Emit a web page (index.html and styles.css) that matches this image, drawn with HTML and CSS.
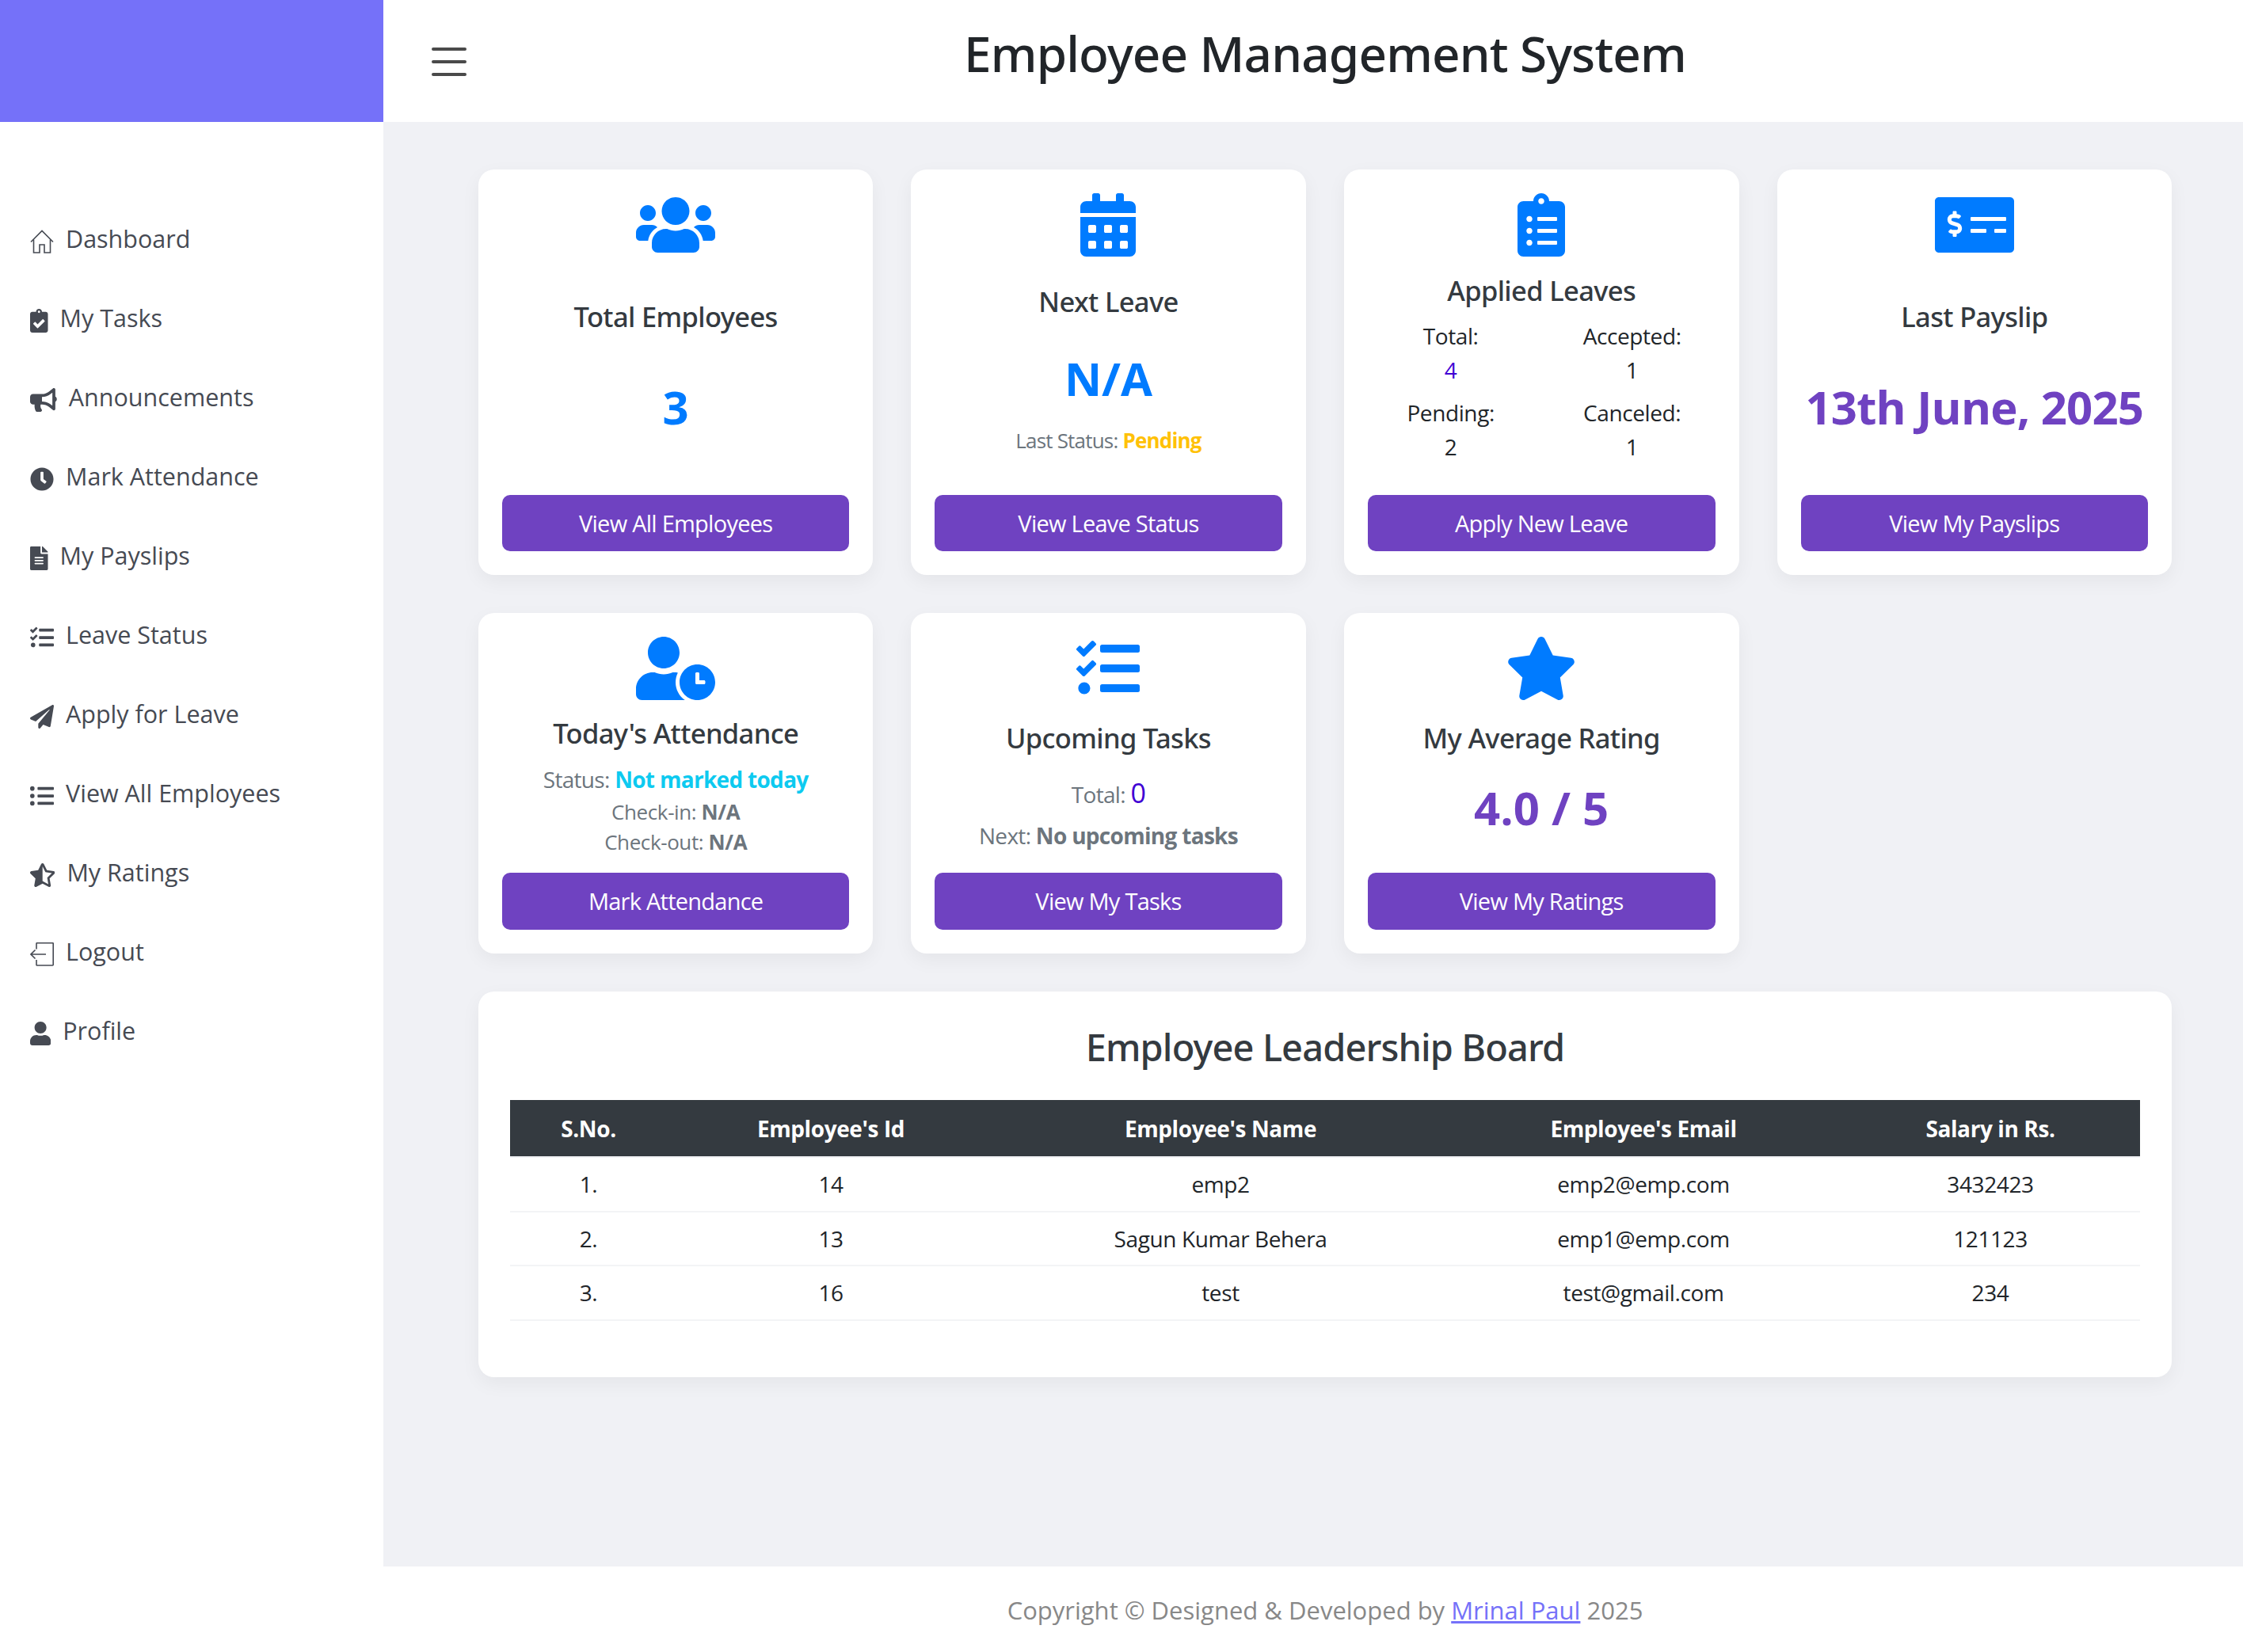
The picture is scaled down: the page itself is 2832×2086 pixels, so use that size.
FILE: index.html
```html
<!DOCTYPE html>
<html>

<head>
    <title>Employee Management System</title>
    <link rel="stylesheet" href="styles.css">
</head>

<body>
    <div class="layout">
        <aside class="sidebar">
            <div class="brand"></div>
            <nav class="nav">
                <a class="nav-item" href="#">
                    <svg class="nav-icon" viewBox="0 0 30 30" fill="none" stroke="currentColor" stroke-width="1.6"><path d="M1 15.5 15 1.5l14 14"/><path d="M4.5 12.5V29h7.5v-10h6v10h7.5V12.5"/></svg>
                    <span>Dashboard</span>
                </a>
                <a class="nav-item" href="#">
                    <svg class="nav-icon" viewBox="0 0 384 512" fill="currentColor"><path d="M336 64h-80c0-35.3-28.7-64-64-64s-64 28.7-64 64H48C21.5 64 0 85.5 0 112v352c0 26.5 21.5 48 48 48h288c26.5 0 48-21.5 48-48V112c0-26.5-21.5-48-48-48zM192 40c13.3 0 24 10.7 24 24s-10.7 24-24 24-24-10.7-24-24 10.7-24 24-24zm121.2 231.8l-143 141.8c-4.7 4.7-12.3 4.6-17-.1l-82.6-83.3c-4.7-4.7-4.6-12.3.1-17L99.1 285c4.7-4.7 12.3-4.6 17 .1l46 46.4 106-105.2c4.7-4.7 12.3-4.6 17 .1l28.2 28.4c4.7 4.8 4.6 12.3-.1 17z"/></svg>
                    <span>My Tasks</span>
                </a>
                <a class="nav-item" href="#">
                    <svg class="nav-icon" viewBox="0 0 576 512" fill="currentColor"><path d="M576 240c0-23.63-12.95-44.04-32-55.12V32.01C544 23.26 537.02 0 512 0c-7.12 0-14.19 2.38-19.98 7.02l-85.03 68.03C364.28 109.19 310.66 128 256 128H64c-35.35 0-64 28.65-64 64v96c0 35.35 28.65 64 64 64h33.7c-1.39 10.48-2.18 21.14-2.18 32 0 39.77 9.26 77.35 25.56 110.94 5.19 10.69 16.52 17.06 28.4 17.06h74.28c26.05 0 41.69-29.84 25.9-50.56-16.4-21.52-26.15-48.36-26.15-77.44 0-11.11 1.62-21.79 4.41-32H256c54.66 0 108.28 18.81 150.98 52.95l85.03 68.03a32.023 32.023 0 0 0 19.98 7.02c24.92 0 32-22.78 32-32V295.13C563.05 284.04 576 263.63 576 240zm-96 141.42l-33.05-26.44C392.95 311.78 325.12 288 256 288v-96c69.12 0 136.95-23.78 190.95-66.98L480 98.58v282.84z"/></svg>
                    <span>Announcements</span>
                </a>
                <a class="nav-item" href="#">
                    <svg class="nav-icon" viewBox="0 0 512 512" fill="currentColor"><path d="M256,8C119,8,8,119,8,256S119,504,256,504,504,393,504,256,393,8,256,8Zm92.49,313h0l-20,25a16,16,0,0,1-22.49,2.5h0l-67-49.72a40,40,0,0,1-15-31.23V112a16,16,0,0,1,16-16h32a16,16,0,0,1,16,16V256l58,42.5A16,16,0,0,1,348.49,321Z"/></svg>
                    <span>Mark Attendance</span>
                </a>
                <a class="nav-item" href="#">
                    <svg class="nav-icon" viewBox="0 0 384 512" fill="currentColor"><path d="M224 136V0H24C10.7 0 0 10.7 0 24v464c0 13.3 10.7 24 24 24h336c13.3 0 24-10.7 24-24V160H248c-13.2 0-24-10.8-24-24zm64 236c0 6.6-5.4 12-12 12H108c-6.6 0-12-5.4-12-12v-8c0-6.6 5.4-12 12-12h168c6.6 0 12 5.4 12 12v8zm0-64c0 6.6-5.4 12-12 12H108c-6.6 0-12-5.4-12-12v-8c0-6.6 5.4-12 12-12h168c6.6 0 12 5.4 12 12v8zm0-72v8c0 6.6-5.4 12-12 12H108c-6.6 0-12-5.4-12-12v-8c0-6.6 5.4-12 12-12h168c6.6 0 12 5.4 12 12zm96-114.1v6.1H256V0h6.1c6.4 0 12.5 2.5 17 7l97.9 98c4.5 4.5 7 10.6 7 16.9z"/></svg>
                    <span>My Payslips</span>
                </a>
                <a class="nav-item" href="#">
                    <svg class="nav-icon" viewBox="0 0 512 512" fill="currentColor"><path d="M139.61 35.5a12 12 0 0 0-17 0L58.93 98.81l-22.7-22.12a12 12 0 0 0-17 0L3.53 92.41a12 12 0 0 0 0 17l47.59 47.4a12.78 12.78 0 0 0 17.61 0l15.59-15.62L156.52 69a12.09 12.09 0 0 0 .09-17zm0 159.19a12 12 0 0 0-17 0l-63.68 63.72-22.7-22.1a12 12 0 0 0-17 0L3.53 252a12 12 0 0 0 0 17L51 316.5a12.77 12.77 0 0 0 17.6 0l15.7-15.69 72.2-72.22a12 12 0 0 0 .09-16.9zM64 368c-26.49 0-48.59 21.5-48.59 48S37.53 464 64 464a48 48 0 0 0 0-96zm432 16H208a16 16 0 0 0-16 16v32a16 16 0 0 0 16 16h288a16 16 0 0 0 16-16v-32a16 16 0 0 0-16-16zm0-320H208a16 16 0 0 0-16 16v32a16 16 0 0 0 16 16h288a16 16 0 0 0 16-16V80a16 16 0 0 0-16-16zm0 160H208a16 16 0 0 0-16 16v32a16 16 0 0 0 16 16h288a16 16 0 0 0 16-16v-32a16 16 0 0 0-16-16z"/></svg>
                    <span>Leave Status</span>
                </a>
                <a class="nav-item" href="#">
                    <svg class="nav-icon" viewBox="0 0 512 512" fill="currentColor"><path d="M476 3.2L12.5 270.6c-18.1 10.4-15.8 35.6 2.2 43.2L121 358.4l287.3-253.2c5.5-4.9 13.3 2.6 8.6 8.3L176 407v80.5c0 23.6 28.5 32.9 42.5 15.8L282 426l124.6 52.2c14.2 6 30.4-2.9 33-18.2l72-432C515 7.8 493.3-6.8 476 3.2z"/></svg>
                    <span>Apply for Leave</span>
                </a>
                <a class="nav-item" href="#">
                    <svg class="nav-icon" viewBox="0 0 512 512" fill="currentColor"><path d="M48 48a48 48 0 1 0 48 48 48 48 0 0 0-48-48zm0 160a48 48 0 1 0 48 48 48 48 0 0 0-48-48zm0 160a48 48 0 1 0 48 48 48 48 0 0 0-48-48zm448 16H176a16 16 0 0 0-16 16v32a16 16 0 0 0 16 16h320a16 16 0 0 0 16-16v-32a16 16 0 0 0-16-16zm0-320H176a16 16 0 0 0-16 16v32a16 16 0 0 0 16 16h320a16 16 0 0 0 16-16V80a16 16 0 0 0-16-16zm0 160H176a16 16 0 0 0-16 16v32a16 16 0 0 0 16 16h320a16 16 0 0 0 16-16v-32a16 16 0 0 0-16-16z"/></svg>
                    <span>View All Employees</span>
                </a>
                <a class="nav-item" href="#">
                    <svg class="nav-icon" viewBox="0 0 536 512" fill="currentColor"><path d="M508.55 171.51L362.18 150.2 296.77 17.81C290.89 5.98 279.42 0 267.95 0c-11.4 0-22.79 5.9-28.69 17.81l-65.43 132.38-146.38 21.29c-26.25 3.8-36.77 36.09-17.74 54.59l105.89 103-25.06 145.48C86.98 495.33 103.57 512 122.15 512c4.93 0 10-1.17 14.87-3.75l130.95-68.68 130.94 68.7c4.86 2.55 9.92 3.71 14.83 3.71 18.6 0 35.22-16.61 31.66-37.4l-25.03-145.49 105.91-102.98c19.04-18.5 8.52-50.8-17.73-54.6zm-121.74 123.2l-18.12 17.62 4.28 24.88 19.52 113.45-102.13-53.59-22.38-11.74.03-317.19 51.03 103.29 11.18 22.63 25.01 3.64 114.23 16.63-82.65 80.38z"/></svg>
                    <span>My Ratings</span>
                </a>
                <a class="nav-item" href="#">
                    <svg class="nav-icon" viewBox="0 0 30 30" fill="none" stroke="currentColor" stroke-width="1.6"><path d="M8 8.500V1.500a.8.8 0 0 1 .8-.8h20a.8.8 0 0 1 .4.8v26.700a.8.8 0 0 1-.8.8H9a.8.8 0 0 1-1-.8V22"/><path d="M20 15H1M6.500 9.500 1 15l5.500 5.500"/></svg>
                    <span>Logout</span>
                </a>
                <a class="nav-item" href="#">
                    <svg class="nav-icon" viewBox="0 0 448 512" fill="currentColor"><path d="M224 256c70.7 0 128-57.3 128-128S294.7 0 224 0 96 57.3 96 128s57.3 128 128 128zm89.6 32h-16.7c-22.2 10.2-46.9 16-72.9 16s-50.6-5.8-72.9-16h-16.7C60.2 288 0 348.2 0 422.4V464c0 26.5 21.5 48 48 48h352c26.5 0 48-21.5 48-48v-41.6c0-74.2-60.2-134.4-134.4-134.4z"/></svg>
                    <span>Profile</span>
                </a>
            </nav>
        </aside>

        <div class="content">
            <header class="topbar">
                <div class="hamburger"><span></span><span></span><span></span></div>
                <h1 class="page-title">Employee Management System</h1>
            </header>

            <main class="main">
                <section class="cards">
                    <div class="card">
                        <svg class="card-icon" viewBox="0 0 640 512" fill="currentColor"><path d="M96 224c35.3 0 64-28.7 64-64s-28.7-64-64-64-64 28.7-64 64 28.7 64 64 64zm448 0c35.3 0 64-28.7 64-64s-28.7-64-64-64-64 28.7-64 64 28.7 64 64 64zm32 32h-64c-17.6 0-33.5 7.1-45.1 18.6 40.3 22.1 68.9 62 75.1 109.4h66c17.7 0 32-14.3 32-32v-32c0-35.3-28.7-64-64-64zm-256 0c61.9 0 112-50.1 112-112S381.9 32 320 32 208 82.1 208 144s50.1 112 112 112zm76.8 32h-8.3c-20.8 10-43.9 16-68.5 16s-47.6-6-68.5-16h-8.3C179.6 288 128 339.6 128 403.2V432c0 26.5 21.5 48 48 48h288c26.5 0 48-21.5 48-48v-28.8c0-63.6-51.6-115.2-115.2-115.2zm-223.7-13.400C161.5 263.1 145.6 256 128 256H64c-35.3 0-64 28.7-64 64v32c0 17.700 14.300 32 32 32h65.900c6.300-47.400 34.900-87.300 75.200-109.400z"/></svg>
                        <div class="card-body body-single">
                            <h3 class="card-title">Total Employees</h3>
                            <p class="card-value value-blue">3</p>
                        </div>
                        <a class="btn" href="#">View All Employees</a>
                    </div>

                    <div class="card">
                        <svg class="card-icon" viewBox="0 0 448 512" fill="currentColor"><path d="M0 464c0 26.500 21.500 48 48 48h352c26.500 0 48-21.500 48-48V192H0v272zm320-196c0-6.600 5.400-12 12-12h40c6.600 0 12 5.400 12 12v40c0 6.600-5.400 12-12 12h-40c-6.600 0-12-5.400-12-12v-40zm0 128c0-6.600 5.400-12 12-12h40c6.600 0 12 5.400 12 12v40c0 6.600-5.400 12-12 12h-40c-6.600 0-12-5.400-12-12v-40zM192 268c0-6.600 5.400-12 12-12h40c6.600 0 12 5.400 12 12v40c0 6.600-5.400 12-12 12h-40c-6.600 0-12-5.400-12-12v-40zm0 128c0-6.600 5.400-12 12-12h40c6.600 0 12 5.400 12 12v40c0 6.600-5.400 12-12 12h-40c-6.600 0-12-5.400-12-12v-40zM64 268c0-6.600 5.400-12 12-12h40c6.600 0 12 5.400 12 12v40c0 6.600-5.400 12-12 12H76c-6.600 0-12-5.400-12-12v-40zm0 128c0-6.600 5.400-12 12-12h40c6.600 0 12 5.400 12 12v40c0 6.600-5.400 12-12 12H76c-6.600 0-12-5.400-12-12v-40zM400 64h-48V16c0-8.800-7.200-16-16-16h-32c-8.800 0-16 7.200-16 16v48H160V16c0-8.800-7.200-16-16-16h-32c-8.800 0-16 7.200-16 16v48H48C21.500 64 0 85.500 0 112v48h448v-48c0-26.500-21.500-48-48-48z"/></svg>
                        <div class="card-body body-leave">
                            <h3 class="card-title">Next Leave</h3>
                            <p class="card-value value-blue">N/A</p>
                            <p class="card-note">Last Status: <b class="text-warning">Pending</b></p>
                        </div>
                        <a class="btn" href="#">View Leave Status</a>
                    </div>

                    <div class="card">
                        <svg class="card-icon" viewBox="0 0 384 512" fill="currentColor"><path d="M336 64h-80c0-35.300-28.700-64-64-64s-64 28.700-64 64H48C21.500 64 0 85.500 0 112v352c0 26.500 21.500 48 48 48h288c26.500 0 48-21.500 48-48V112c0-26.500-21.500-48-48-48zM96 424c-13.300 0-24-10.700-24-24s10.700-24 24-24 24 10.700 24 24-10.700 24-24 24zm0-96c-13.300 0-24-10.700-24-24s10.700-24 24-24 24 10.700 24 24-10.700 24-24 24zm0-96c-13.300 0-24-10.700-24-24s10.700-24 24-24 24 10.700 24 24-10.700 24-24 24zm96-192c13.300 0 24 10.700 24 24s-10.700 24-24 24-24-10.700-24-24 10.700-24 24-24zm128 368c0 4.400-3.600 8-8 8H168c-4.400 0-8-3.600-8-8v-16c0-4.400 3.600-8 8-8h144c4.400 0 8 3.600 8 8v16zm0-96c0 4.400-3.600 8-8 8H168c-4.400 0-8-3.600-8-8v-16c0-4.400 3.600-8 8-8h144c4.400 0 8 3.600 8 8v16zm0-96c0 4.400-3.600 8-8 8H168c-4.400 0-8-3.600-8-8v-16c0-4.400 3.600-8 8-8h144c4.400 0 8 3.600 8 8v16z"/></svg>
                        <div class="card-body body-applied">
                            <h3 class="card-title">Applied Leaves</h3>
                            <div class="leave-grid">
                                <div>Total:</div>
                                <div>Accepted:</div>
                                <div class="text-indigo">4</div>
                                <div>1</div>
                                <div>Pending:</div>
                                <div>Canceled:</div>
                                <div>2</div>
                                <div>1</div>
                            </div>
                        </div>
                        <a class="btn" href="#">Apply New Leave</a>
                    </div>

                    <div class="card">
                        <svg class="card-icon" viewBox="0 0 640 512" fill="currentColor"><path d="M608 32H32C14.330 32 0 46.330 0 64v384c0 17.670 14.330 32 32 32h576c17.670 0 32-14.330 32-32V64c0-17.670-14.330-32-32-32zM176 327.880V344c0 4.420-3.580 8-8 8h-16c-4.420 0-8-3.580-8-8v-16.290c-11.290-.58-22.270-4.520-31.370-11.350-3.900-2.930-4.100-8.770-.57-12.140l11.750-11.210c2.770-2.640 6.890-2.760 10.130-.73 3.870 2.420 8.260 3.720 12.820 3.720h28.110c6.500 0 11.800-5.920 11.800-13.190 0-5.950-3.610-11.190-8.770-12.730l-45-13.500c-18.590-5.580-31.580-23.420-31.580-43.390 0-24.520 19.050-44.440 42.670-45.070V152c0-4.420 3.580-8 8-8h16c4.420 0 8 3.580 8 8v16.290c11.290.58 22.270 4.510 31.370 11.350 3.900 2.930 4.100 8.770.57 12.140l-11.750 11.210c-2.770 2.640-6.890 2.760-10.130.73-3.870-2.430-8.260-3.720-12.820-3.720h-28.110c-6.500 0-11.800 5.920-11.800 13.190 0 5.950 3.610 11.190 8.770 12.730l45 13.500c18.590 5.580 31.580 23.420 31.580 43.390 0 24.530-19.050 44.440-42.670 45.070zM416 312c0 4.420-3.580 8-8 8H296c-4.420 0-8-3.580-8-8v-16c0-4.420 3.580-8 8-8h112c4.420 0 8 3.580 8 8v16zm160 0c0 4.420-3.580 8-8 8h-80c-4.420 0-8-3.580-8-8v-16c0-4.420 3.580-8 8-8h80c4.420 0 8 3.580 8 8v16zm0-96c0 4.420-3.580 8-8 8H296c-4.420 0-8-3.580-8-8v-16c0-4.420 3.580-8 8-8h272c4.420 0 8 3.580 8 8v16z"/></svg>
                        <div class="card-body body-single">
                            <h3 class="card-title">Last Payslip</h3>
                            <p class="card-value value-purple">13th June, 2025</p>
                        </div>
                        <a class="btn" href="#">View My Payslips</a>
                    </div>

                    <div class="card">
                        <svg class="card-icon" viewBox="0 0 640 512" fill="currentColor"><path d="M496 224c-79.600 0-144 64.400-144 144s64.400 144 144 144 144-64.400 144-144-64.400-144-144-144zm64 150.300c0 5.300-4.400 9.700-9.700 9.700h-60.600c-5.300 0-9.700-4.400-9.700-9.700v-76.600c0-5.300 4.400-9.700 9.700-9.700h12.600c5.300 0 9.700 4.400 9.700 9.700V352h38.300c5.300 0 9.700 4.400 9.700 9.700v12.600zM320 368c0-27.800 6.700-54.100 18.200-77.500-8-1.500-16.200-2.500-24.600-2.500h-16.700c-22.200 10.200-46.900 16-72.900 16s-50.600-5.800-72.900-16h-16.700C60.200 288 0 348.200 0 422.400V464c0 26.500 21.500 48 48 48h347.100c-45.300-31.900-75.100-84.500-75.100-144zm-96-112c70.700 0 128-57.300 128-128S294.700 0 224 0 96 57.300 96 128s57.300 128 128 128z"/></svg>
                        <div class="card-body body-attendance">
                            <h3 class="card-title">Today's Attendance</h3>
                            <p class="status-line">Status: <b class="text-info">Not marked today</b></p>
                            <p class="card-note">Check-in: <b>N/A</b></p>
                            <p class="card-note">Check-out: <b>N/A</b></p>
                        </div>
                        <a class="btn" href="#">Mark Attendance</a>
                    </div>

                    <div class="card">
                        <svg class="card-icon" viewBox="0 0 512 512" fill="currentColor"><path d="M139.610 35.500a12 12 0 0 0-17 0L58.930 98.810l-22.700-22.120a12 12 0 0 0-17 0L3.530 92.410a12 12 0 0 0 0 17l47.590 47.400a12.780 12.780 0 0 0 17.610 0l15.590-15.620L156.520 69a12.090 12.090 0 0 0 .09-17zm0 159.190a12 12 0 0 0-17 0l-63.680 63.720-22.700-22.100a12 12 0 0 0-17 0L3.530 252a12 12 0 0 0 0 17L51 316.500a12.770 12.770 0 0 0 17.600 0l15.700-15.690 72.200-72.220a12 12 0 0 0 .09-16.900zM64 368c-26.490 0-48.590 21.500-48.590 48S37.530 464 64 464a48 48 0 0 0 0-96zm432 16H208a16 16 0 0 0-16 16v32a16 16 0 0 0 16 16h288a16 16 0 0 0 16-16v-32a16 16 0 0 0-16-16zm0-320H208a16 16 0 0 0-16 16v32a16 16 0 0 0 16 16h288a16 16 0 0 0 16-16V80a16 16 0 0 0-16-16zm0 160H208a16 16 0 0 0-16 16v32a16 16 0 0 0 16 16h288a16 16 0 0 0 16-16v-32a16 16 0 0 0-16-16z"/></svg>
                        <div class="card-body body-tasks">
                            <h3 class="card-title">Upcoming Tasks</h3>
                            <p class="status-line">Total: <span class="text-indigo task-count">0</span></p>
                            <p class="status-line">Next: <b>No upcoming tasks</b></p>
                        </div>
                        <a class="btn" href="#">View My Tasks</a>
                    </div>

                    <div class="card">
                        <svg class="card-icon" viewBox="0 0 576 512" fill="currentColor"><path d="M259.300 17.800L194 150.200 47.900 171.500c-26.200 3.800-36.700 36.100-17.700 54.600l105.700 103-25 145.500c-4.500 26.300 23.200 46 46.400 33.700L288 439.600l130.700 68.700c23.200 12.200 50.900-7.400 46.400-33.700l-25-145.500 105.700-103c19-18.500 8.500-50.800-17.700-54.600L382 150.200 316.700 17.800c-11.700-23.600-45.600-23.900-57.400 0z"/></svg>
                        <div class="card-body body-rating">
                            <h3 class="card-title">My Average Rating</h3>
                            <p class="card-value value-purple">4.0 / 5</p>
                        </div>
                        <a class="btn" href="#">View My Ratings</a>
                    </div>
                </section>

                <section class="board">
                    <h2 class="board-title">Employee Leadership Board</h2>
                    <table class="board-table">
                        <colgroup>
                            <col class="col-sno">
                            <col class="col-id">
                            <col class="col-name">
                            <col class="col-email">
                            <col class="col-salary">
                        </colgroup>
                        <thead>
                            <tr>
                                <th>S.No.</th>
                                <th>Employee's Id</th>
                                <th>Employee's Name</th>
                                <th>Employee's Email</th>
                                <th>Salary in Rs.</th>
                            </tr>
                        </thead>
                        <tbody>
                            <tr>
                                <td>1.</td>
                                <td>14</td>
                                <td>emp2</td>
                                <td>emp2@emp.com</td>
                                <td>3432423</td>
                            </tr>
                            <tr>
                                <td>2.</td>
                                <td>13</td>
                                <td>Sagun Kumar Behera</td>
                                <td>emp1@emp.com</td>
                                <td>121123</td>
                            </tr>
                            <tr>
                                <td>3.</td>
                                <td>16</td>
                                <td>test</td>
                                <td>test@gmail.com</td>
                                <td>234</td>
                            </tr>
                        </tbody>
                    </table>
                </section>
            </main>

            <footer class="footer">
                <p>Copyright © Designed &amp; Developed by <a href="#">Mrinal Paul</a> 2025</p>
            </footer>
        </div>
    </div>
</body>
</html>
```

FILE: styles.css
```css
* {
    box-sizing: border-box;
}

body {
    margin: 0;
    font-family: "Open Sans", "Noto Sans", sans-serif;
    background-color: #fff;
    color: #212529;
}

p,
h1,
h2,
h3 {
    margin: 0;
}

.layout {
    display: grid;
    grid-template-columns: 484px 1fr;
    min-height: 2086px;
}

/* sidebar */
.brand {
    height: 154px;
    background-color: #7571f9;
}

.nav {
    padding-top: 98px;
}

.nav-item {
    display: flex;
    align-items: center;
    gap: 15px;
    height: 100px;
    padding-left: 38px;
    color: #464a53;
    font-size: 30.5px;
    text-decoration: none;
}

.nav-item span {
    margin-bottom: 3px;
}

.nav-icon {
    height: 30px;
    margin-top: 5px;
}

/* top bar */
.content {
    display: flex;
    flex-direction: column;
}

.topbar {
    position: relative;
    height: 154px;
    padding: 25px 90px 0 120px;
    background-color: #fff;
    text-align: center;
}

.hamburger {
    position: absolute;
    left: 61px;
    top: 60px;
    width: 44px;
}

.hamburger span {
    display: block;
    height: 4px;
    margin-bottom: 12px;
    border-radius: 2px;
    background-color: #4a4a4a;
}

.page-title {
    font-family: "Noto Sans", "Open Sans", sans-serif;
    font-size: 62px;
    font-weight: 500;
    line-height: 84px;
    letter-spacing: -0.85px;
    color: #212529;
}

/* cards */
.main {
    flex: 1;
    padding: 60px 90px 0 120px;
    background-color: #f0f1f5;
}

.cards {
    display: grid;
    grid-template-columns: repeat(4, 1fr);
    grid-template-rows: 512px 430px;
    gap: 48px;
}

.card {
    display: flex;
    flex-direction: column;
    align-items: center;
    padding: 30px;
    border-radius: 20px;
    background-color: #fff;
    box-shadow: 0 8px 24px rgba(0, 0, 0, 0.05);
    text-align: center;
}

.card-icon {
    flex: none;
    height: 80px;
    color: #007bff;
}

.card-body {
    flex: 1;
    width: 100%;
}

.card-title {
    font-family: "Noto Sans", "Open Sans", sans-serif;
    font-size: 34.5px;
    font-weight: 500;
    line-height: 48px;
    letter-spacing: -0.65px;
    color: #343a40;
}

.card-value {
    font-size: 58px;
    font-weight: 700;
    line-height: 78px;
}

.value-blue {
    color: #007bff;
}

.value-purple {
    color: #6f42c1;
    letter-spacing: -0.8px;
}

.card-note {
    font-size: 26px;
    line-height: 38px;
    letter-spacing: -0.4px;
    color: #6c757d;
}

.status-line {
    font-size: 28px;
    line-height: 40px;
    letter-spacing: -0.7px;
    color: #6c757d;
}

.text-warning {
    color: #ffc107;
}

.text-info {
    color: #0dcaf0;
}

.text-indigo {
    color: #4000d4;
}

.task-count {
    font-size: 34px;
}

.body-single {
    padding-top: 52px;
}

.body-single .card-value {
    margin-top: 51px;
}

.body-leave {
    padding-top: 33px;
}

.body-leave .card-value {
    margin-top: 34px;
}

.body-leave .card-note {
    margin-top: 20px;
    letter-spacing: -0.8px;
}

.body-applied {
    padding-top: 19px;
}

.body-attendance {
    padding-top: 18px;
}

.body-attendance .status-line {
    margin-top: 14px;
}

.body-attendance .card-note {
    margin-top: 2px;
}

.body-attendance .card-note + .card-note {
    margin-top: 0;
}

.body-tasks {
    padding-top: 24px;
}

.body-tasks .status-line {
    margin-top: 25px;
}

.body-tasks .status-line + .status-line {
    margin-top: 12px;
}

.body-rating {
    padding-top: 24px;
}

.body-rating .card-value {
    margin-top: 25px;
    letter-spacing: 0;
}

.leave-grid {
    display: grid;
    grid-template-columns: 210px 210px;
    grid-auto-rows: 43px;
    justify-content: center;
    column-gap: 19px;
    margin-top: 12px;
    font-size: 28px;
    line-height: 43px;
    letter-spacing: -0.4px;
}

.leave-grid > :nth-child(n+5) {
    position: relative;
    top: 11px;
}

.btn {
    flex: none;
    display: block;
    width: 100%;
    height: 71px;
    border-radius: 10px;
    background-color: #6f42c1;
    color: #fff;
    font-size: 29px;
    line-height: 71px;
    letter-spacing: -0.75px;
    text-decoration: none;
}

.card:nth-child(n+5) .btn {
    height: 72px;
}

/* leaderboard */
.board {
    height: 487px;
    margin-top: 48px;
    padding: 36px 40px 0;
    border-radius: 20px;
    background-color: #fff;
    box-shadow: 0 8px 24px rgba(0, 0, 0, 0.05);
}

.board-title {
    height: 101px;
    font-family: "Noto Sans", "Open Sans", sans-serif;
    font-size: 47px;
    font-weight: 500;
    line-height: 69px;
    letter-spacing: -0.9px;
    color: #343a40;
    text-align: center;
}

.board-table {
    width: 100%;
    border-collapse: collapse;
    table-layout: fixed;
    font-size: 28px;
    letter-spacing: -0.4px;
    text-align: center;
}

.col-sno {
    width: 198px;
}

.col-id {
    width: 414px;
}

.col-name {
    width: 570px;
}

.col-email {
    width: 498px;
}

.col-salary {
    width: 378px;
}

.board-table th {
    height: 72px;
    border-bottom: 2px solid #f0f1f5;
    background-color: #343a40;
    color: #fff;
    font-weight: 700;
}

.board-table td {
    height: 68.5px;
    padding: 0;
    border-bottom: 2px solid #f3f4f6;
}

/* footer */
.footer {
    height: 108px;
    padding: 1px 90px 0 120px;
    background-color: #fff;
    color: #888;
    font-size: 31px;
    line-height: 108px;
    text-align: center;
}

.footer a {
    color: #7571f9;
}
```
